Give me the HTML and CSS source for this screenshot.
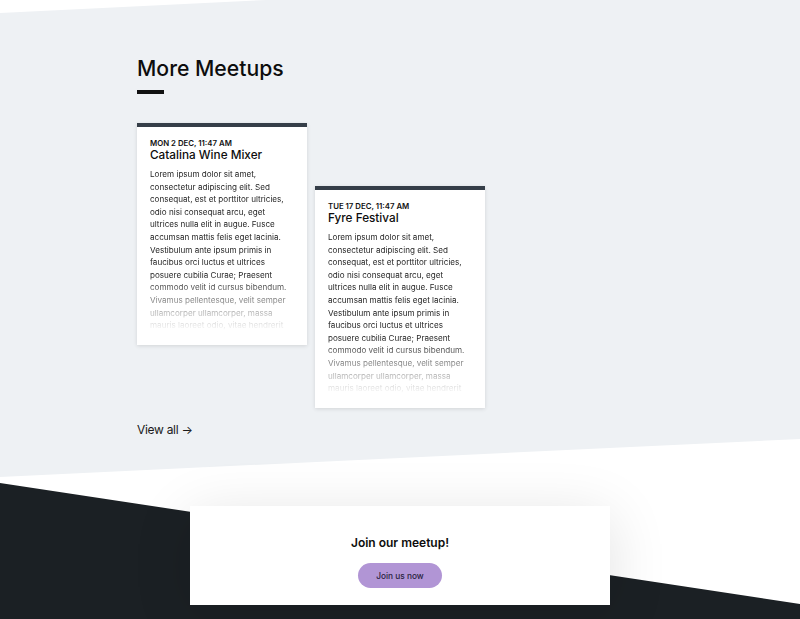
FILE: index.html
```html
<!DOCTYPE html>
<html lang="en">
<head>
<meta charset="utf-8">
<title>More Meetups</title>
<link rel="stylesheet" href="styles.css">
</head>
<body>
<section class="meetups">
  <div class="container">
    <h2 class="title">More Meetups</h2>
    <div class="title-bar"></div>
    <div class="cards">
      <article class="card">
        <div class="card-date">Mon 2 Dec, 11:47 AM</div>
        <h3 class="card-title">Catalina Wine Mixer</h3>
        <p class="card-text">Lorem ipsum dolor sit amet, consectetur adipiscing elit. Sed consequat, est et porttitor ultricies, odio nisi consequat arcu, eget ultrices nulla elit in augue. Fusce accumsan mattis felis eget lacinia. Vestibulum ante ipsum primis in faucibus orci luctus et ultrices posuere cubilia Curae; Praesent commodo velit id cursus bibendum. Vivamus pellentesque, velit semper ullamcorper ullamcorper, massa mauris laoreet odio, vitae hendrerit nisi mi sed nibh.</p>
      </article>
      <article class="card card-offset">
        <div class="card-date">Tue 17 Dec, 11:47 AM</div>
        <h3 class="card-title">Fyre Festival</h3>
        <p class="card-text">Lorem ipsum dolor sit amet, consectetur adipiscing elit. Sed consequat, est et porttitor ultricies, odio nisi consequat arcu, eget ultrices nulla elit in augue. Fusce accumsan mattis felis eget lacinia. Vestibulum ante ipsum primis in faucibus orci luctus et ultrices posuere cubilia Curae; Praesent commodo velit id cursus bibendum. Vivamus pellentesque, velit semper ullamcorper ullamcorper, massa mauris laoreet odio, vitae hendrerit nisi mi sed nibh.</p>
      </article>
    </div>
    <a class="view-all" href="#">View all →</a>
  </div>
</section>
<section class="cta">
  <div class="cta-box">
    <h3 class="cta-title">Join our meetup!</h3>
    <a class="cta-button" href="#">Join us now</a>
  </div>
</section>
</body>
</html>
```
FILE: styles.css
```css
html, body {
  margin: 0;
  padding: 0;
  overflow: hidden;
  background: #ffffff;
  font-family: Inter, "Noto Sans", sans-serif;
  color: #111;
}

.meetups {
  height: 477px;
  box-sizing: border-box;
  background: #eef1f4;
  clip-path: polygon(0 13px, 100% -26px, 100% calc(100% - 38px), 0 100%);
  padding-top: 56px;
}

.container {
  width: 526px;
  margin: 0 auto;
}

.title {
  margin: 0;
  font-size: 21.2px;
  line-height: 1.2;
  font-weight: 500;
  color: #0d0d0d;
}

.title-bar {
  width: 27px;
  height: 4px;
  background: #111;
  margin-top: 8.5px;
}

.cards {
  display: grid;
  grid-template-columns: repeat(3, 170px);
  column-gap: 8px;
  align-items: start;
  margin-top: 29px;
}

.card {
  background: #fff;
  border-top: 4px solid #353e48;
  padding: 12px 13px 13px;
  box-shadow: 0 1px 4px rgba(0, 0, 0, 0.12);
}

.card-offset {
  margin-top: 63px;
}

.card-date {
  font-size: 7.8px;
  line-height: 1.2;
  font-weight: 600;
  text-transform: uppercase;
  color: #111;
}

.card-title {
  margin: 0;
  font-size: 11.75px;
  line-height: 1.25;
  font-weight: 500;
  color: #0d0d0d;
}

.card-text {
  margin: 5px 0 0;
  font-size: 8.1px;
  line-height: 12.6px;
  color: #262626;
  height: 164px;
  overflow: hidden;
  -webkit-mask-image: linear-gradient(to bottom, #000 65%, transparent 100%);
  mask-image: linear-gradient(to bottom, #000 65%, transparent 100%);
}

.view-all {
  display: inline-block;
  margin-top: 14px;
  font-size: 12px;
  letter-spacing: -0.3px;
  color: #1a1a1a;
  text-decoration: none;
}

.cta {
  position: relative;
  height: 142px;
  box-sizing: border-box;
  padding-top: 29px;
}

.cta::before {
  content: "";
  position: absolute;
  inset: 0;
  background: #1b2024;
  clip-path: polygon(0 6px, 100% 127px, 100% 100%, 0 100%);
}

.cta-box {
  position: relative;
  width: 420px;
  margin: 0 auto;
  background: #fff;
  box-shadow: 0 10px 60px rgba(0, 0, 0, 0.12);
  padding: 30px 0 17px;
  display: flex;
  flex-direction: column;
  align-items: center;
}

.cta-title {
  margin: 0;
  font-size: 12px;
  line-height: 1.2;
  font-weight: 600;
  color: #0d0d0d;
}

.cta-button {
  margin-top: 13px;
  width: 84px;
  height: 25px;
  border-radius: 13px;
  background: #b195d5;
  color: #2a2340;
  font-size: 8.3px;
  font-weight: 500;
  text-decoration: none;
  display: flex;
  align-items: center;
  justify-content: center;
}
```
